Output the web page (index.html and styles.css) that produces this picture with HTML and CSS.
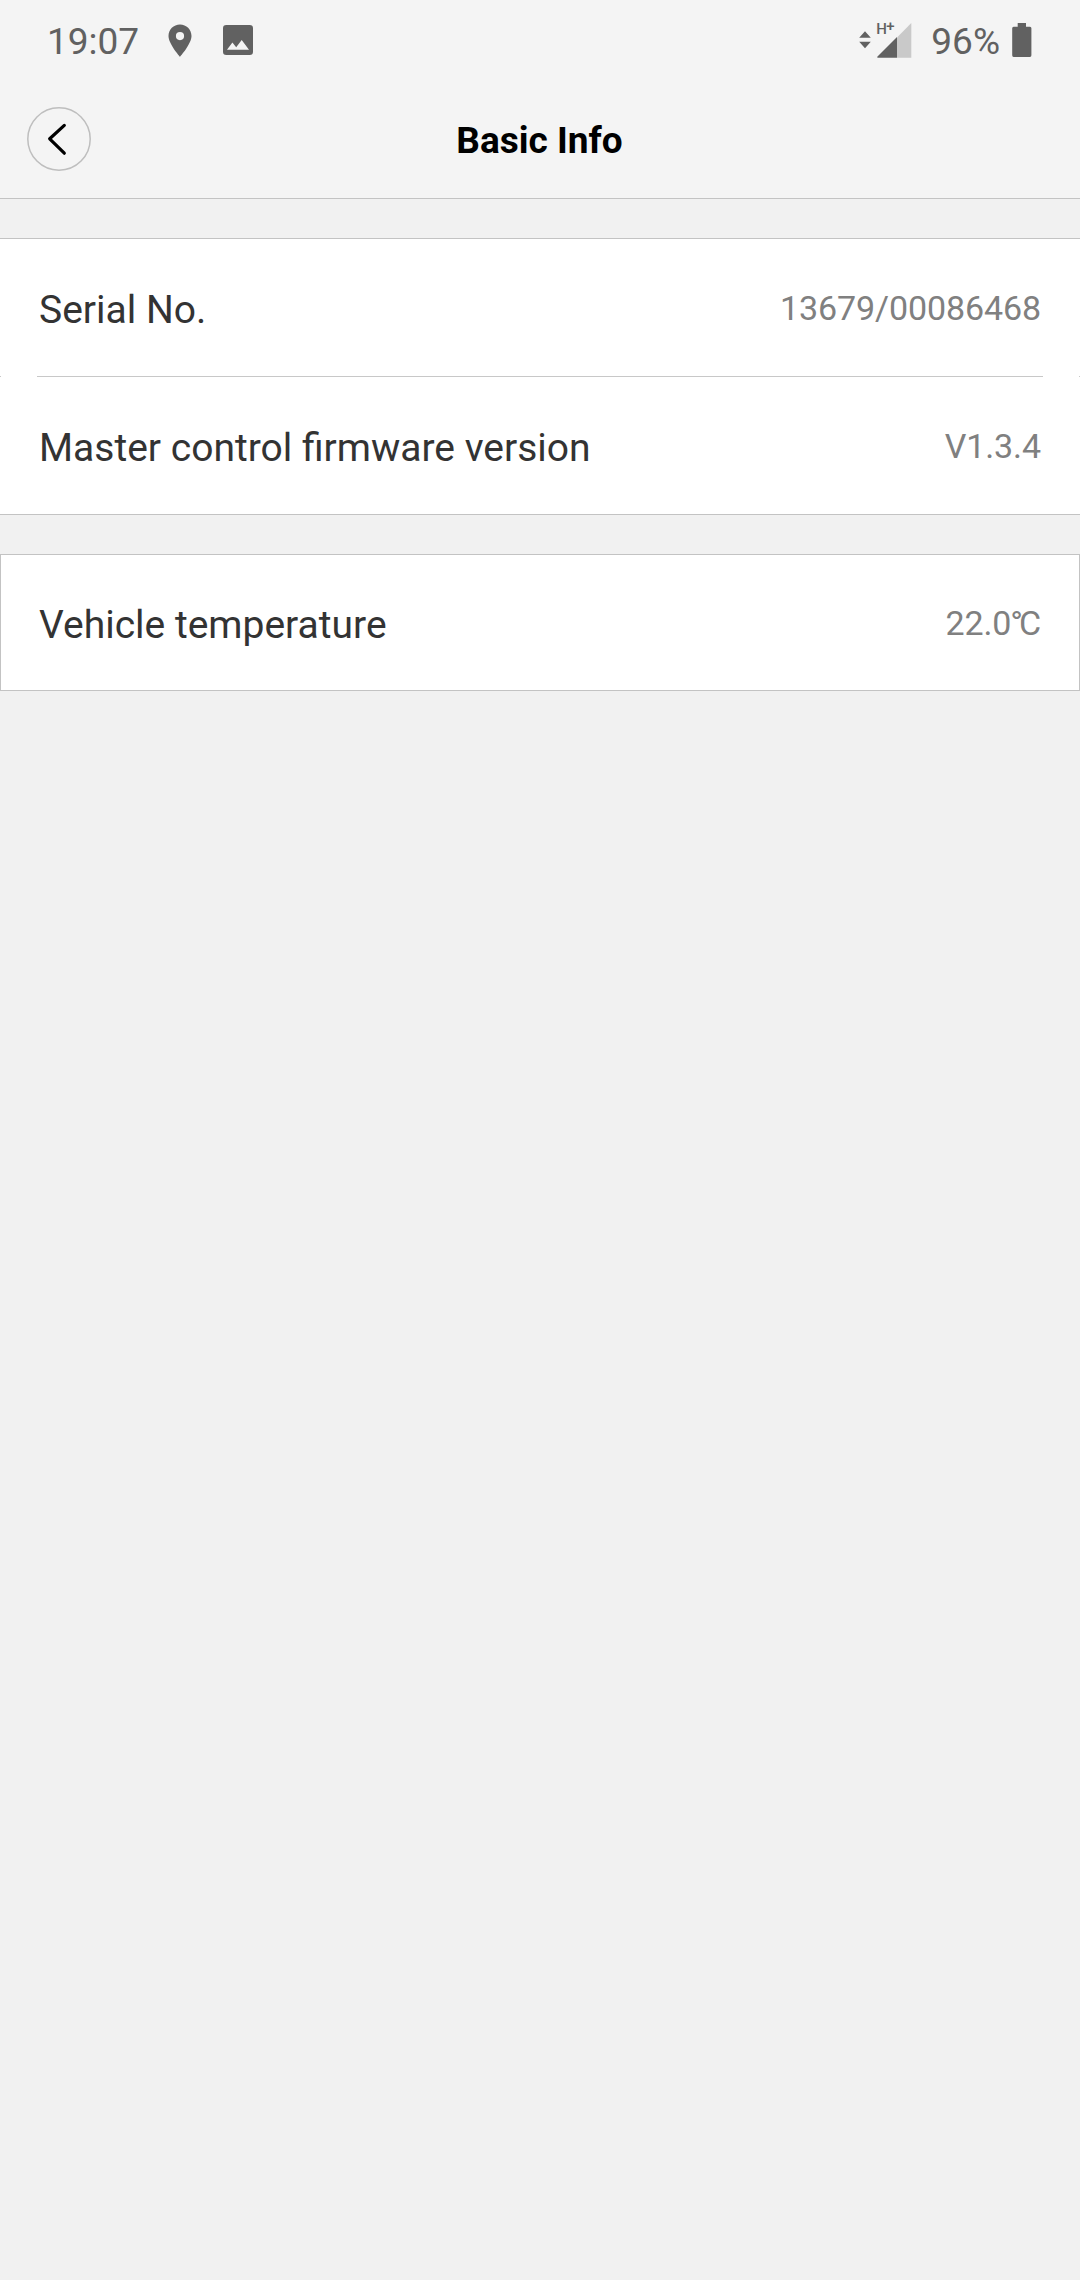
FILE: index.html
```
<!DOCTYPE html>
<html lang="en">
<head>
    <meta charset="UTF-8">
    <meta name="viewport" content="width=device-width, initial-scale=1.0">
    <title>Basic Info</title>
    <link rel="stylesheet" href="styles.css">
</head>
<body>
    <header class="header">
        <!-- Phone status bar -->
        <div class="status-bar">
            <span class="time">19:07</span>
            <svg class="icon-location" viewBox="0 0 24 33" width="24" height="33">
                <path d="M12 0.5C5.6 0.5 0.5 5.6 0.5 12C0.5 20 12 32.8 12 32.8S23.5 20 23.5 12C23.5 5.6 18.4 0.5 12 0.5zM12 16.2a4.1 4.1 0 1 1 0-8.2a4.1 4.1 0 0 1 0 8.2z" fill="#616161"/>
            </svg>
            <svg class="icon-image" viewBox="0 0 30 30" width="30" height="30">
                <path d="M3.3 0H26.7A3.3 3.3 0 0 1 30 3.3V26.7A3.3 3.3 0 0 1 26.7 30H3.3A3.3 3.3 0 0 1 0 26.7V3.3A3.3 3.3 0 0 1 3.3 0zM4 24.7H26L18.7 15L13.2 22.2L9.4 17.6z" fill="#616161" fill-rule="evenodd"/>
            </svg>
            <div class="status-right">
                <svg class="icon-data" viewBox="0 0 12 18" width="12" height="18">
                    <path d="M6 0.3L11.8 6.7H0.2zM6 17.3L0.2 10.8H11.8z" fill="#616161"/>
                </svg>
                <div class="signal">
                    <span class="network">H<span class="plus">+</span></span>
                    <svg viewBox="0 0 35 35" width="35" height="35">
                        <path d="M20 14.5L34.3 0V34.7H20z" fill="#c9c9c9"/>
                        <path d="M20 14V34.7H0.8Q-0.2 34.5 0.5 33.6z" fill="#616161"/>
                    </svg>
                </div>
                <span class="percent">96%</span>
                <svg class="icon-battery" viewBox="0 0 20 34" width="20" height="34">
                    <path d="M5.7 0H14V3.8H18Q19.4 3.8 19.4 5.3V32.3Q19.4 34 17.9 34H1.6Q0.2 34 0.2 32.3V5.3Q0.2 3.8 1.6 3.8H5.7z" fill="#616161"/>
                </svg>
            </div>
        </div>

        <!-- Title bar -->
        <div class="nav-bar">
            <a class="back" href="#" aria-label="Back">
                <svg viewBox="0 0 64 64" width="64" height="64">
                    <circle cx="32" cy="32" r="31.2" fill="none" stroke="#bebebe" stroke-width="1.5"/>
                    <path d="M37.3 18.4L22.7 31.8L37.3 46.2" fill="none" stroke="#000" stroke-width="3.2" stroke-linecap="round" stroke-linejoin="round"/>
                </svg>
            </a>
            <h1>Basic Info</h1>
        </div>
    </header>

    <main>
        <div class="group">
            <div class="row">
                <span class="label">Serial No.</span>
                <span class="value">13679/00086468</span>
            </div>
            <div class="divider"></div>
            <div class="row">
                <span class="label">Master control firmware version</span>
                <span class="value">V1.3.4</span>
            </div>
        </div>

        <div class="group boxed">
            <div class="row">
                <span class="label">Vehicle temperature</span>
                <span class="value">22.0<span class="degree">°</span>C</span>
            </div>
        </div>
    </main>
</body>
</html>
```
FILE: styles.css
```
body {
    font-family: Roboto, "Noto Sans", sans-serif;
    margin: 0;
    padding: 0;
    min-height: 100vh;
    background-color: #f1f1f1;
    color: #333;
}
svg {
    display: block;
}
.header {
    background-color: #f4f4f4;
    border-bottom: 1px solid #c3c3c3;
}

/* Status bar */
.status-bar {
    display: flex;
    align-items: center;
    height: 80px;
    padding: 0 48px 0 47px;
    color: #616161;
    font-size: 37px;
    line-height: 76px;
}
.time {
    width: 93px;
    padding-top: 4px;
}
.icon-location {
    margin-left: 28px;
}
.icon-image {
    margin-left: 31px;
}
.status-right {
    display: flex;
    align-items: center;
    margin-left: auto;
}
.signal {
    position: relative;
    margin-left: 6px;
}
.network {
    position: absolute;
    left: -1px;
    top: -3px;
    font-size: 15px;
    font-weight: 500;
    line-height: 18px;
}
.plus {
    position: absolute;
    left: 10px;
    top: -3px;
}
.percent {
    margin-left: 19px;
    padding-top: 4px;
}
.icon-battery {
    margin-left: 12px;
}

/* Title bar */
.nav-bar {
    display: grid;
    grid-template-columns: 64px 1fr 64px;
    align-items: center;
    height: 118px;
    padding: 0 27px;
}
h1 {
    margin: 0;
    padding-top: 3px;
    padding-right: 1px;
    color: #000;
    font-size: 37px;
    font-weight: 700;
    line-height: 44px;
    text-align: center;
}

/* Info groups */
.group {
    margin-top: 39px;
    background-color: #fff;
    border-top: 1px solid #c3c3c3;
    border-bottom: 1px solid #c3c3c3;
}
.row {
    display: flex;
    justify-content: space-between;
    align-items: center;
    height: 137px;
    padding: 0 39px;
}
.divider {
    height: 1px;
    padding: 0 36px;
    border: solid #c8c8c8;
    border-width: 0 1px;
    background-color: #c8c8c8;
    background-clip: content-box;
}
.boxed {
    border: 1px solid #c3c3c3;
}
.boxed .row {
    height: 135px;
    padding: 0 38px;
}
.label {
    padding-top: 4px;
    font-size: 39px;
}
.value {
    color: #808080;
    font-size: 34px;
    letter-spacing: -0.1px;
}
.degree {
    margin-left: -1px;
    letter-spacing: -4px;
}
```
